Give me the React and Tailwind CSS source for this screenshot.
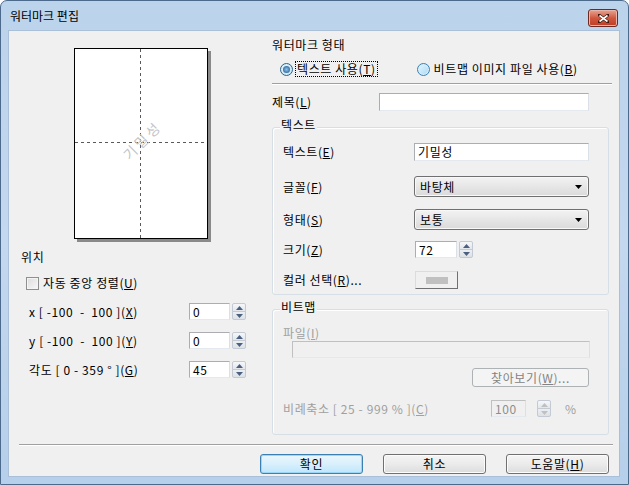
import React from "react";

function Spin({ disabled }) {
  const arrow = disabled ? "#c0c0c0" : "#4b5f80";
  return (
    <div className="flex flex-col w-[14px] h-[17px]">
      <div className="h-[9px] flex items-center justify-center border border-[#c3cad3] rounded-t-[2px] bg-linear-to-b from-[#f6f7f9] to-[#e3e7eb]">
        <svg width="7" height="4" viewBox="0 0 7 4">
          <path d="M0 4 L3.5 0 L7 4 Z" fill={arrow} />
        </svg>
      </div>
      <div className="h-[9px] -mt-px flex items-center justify-center border border-[#c3cad3] rounded-b-[2px] bg-linear-to-b from-[#eceff2] to-[#dde2e7]">
        <svg width="7" height="4" viewBox="0 0 7 4">
          <path d="M0 0 L3.5 4 L7 0 Z" fill={arrow} />
        </svg>
      </div>
    </div>
  );
}

function TextBox({ value, className, disabled }) {
  return (
    <div
      className={
        "h-[17px] border border-[#abadb3] border-r-[#dbdfe6] border-b-[#e3e9ef] px-[3px] leading-[15px] " +
        (disabled ? "bg-[#f0f0f0] text-[#8d8d8d] border-[#c0c0c0]" : "bg-white ") +
        " " + className
      }
    >
      {value}
    </div>
  );
}

function SpinBox({ value, width, disabled }) {
  return (
    <div className="flex items-center gap-[2px]">
      <TextBox value={value} className={width} disabled={disabled} />
      <Spin disabled={disabled} />
    </div>
  );
}

function Combo({ value }) {
  return (
    <div className="w-[175px] h-[21px] border border-[#707070] rounded-[3px] bg-linear-to-b from-[#f3f3f3] to-[#dadada] flex items-center justify-between pl-[5px] pr-[6px] shadow-[inset_0_0_0_1px_#f8f8f8]">
      <span>{value}</span>
      <svg width="7" height="4" viewBox="0 0 7 4">
        <path d="M0 0 L7 0 L3.5 4 Z" fill="#000" />
      </svg>
    </div>
  );
}

function Button({ children, primary, disabled, className }) {
  const look = primary
    ? "border-[#3c7fb1] bg-linear-to-b from-[#eaf6fd] via-[#d9f0fc] to-[#bee6fd] shadow-[inset_0_0_0_1px_#9ad6f5]"
    : "border-[#707070] bg-linear-to-b from-[#f4f4f4] via-[#ebebeb] to-[#dcdcdc] shadow-[inset_0_0_0_1px_#fcfcfc]";
  return (
    <div
      className={
        "border rounded-[3px] flex items-center justify-center " +
        (disabled ? "border-[#adb2b5] bg-[#f4f4f4] text-[#838383]" : look) +
        " " + className
      }
    >
      {children}
    </div>
  );
}

function Radio({ checked }) {
  return checked ? (
    <div className="w-[13px] h-[13px] rounded-full border border-[#2c628b] bg-linear-to-br from-[#e5f4fc] to-[#c4e5f6] flex items-center justify-center">
      <div className="w-[7px] h-[7px] rounded-full bg-radial from-[#8ac6f0] to-[#1c4f80]" />
    </div>
  ) : (
    <div className="w-[13px] h-[13px] rounded-full border border-[#3c7fb1] bg-linear-to-br from-[#e8f6fd] to-[#a9d9f5] shadow-[inset_0_0_0_1px_#d9effb]" />
  );
}

function GroupBox({ title, className, children }) {
  return (
    <div className={"flex flex-col border border-[#d5dfe5] rounded-[3px] shadow-[inset_1px_1px_0_#fff] " + className}>
      <span className="-mt-[11px] ml-[7px] px-[1px] w-fit bg-[#f0f0f0] leading-[16px]">{title}</span>
      {children}
    </div>
  );
}

function Preview() {
  return (
    <div className="relative ml-[65px] mt-[17px] w-[134px] h-[191px] bg-white border border-black shadow-[3px_3px_0_#8a8a8a]">
      <svg className="absolute inset-0" width="132" height="189">
        <line x1="65.5" y1="0" x2="65.5" y2="189" stroke="#5a5a5a" strokeDasharray="3 3" />
        <line x1="0" y1="93.5" x2="132" y2="93.5" stroke="#5a5a5a" strokeDasharray="3 3" />
      </svg>
      <span className="absolute left-[37px] top-[83px] w-[60px] text-center text-[14px] tracking-[3px] leading-[16px] text-[#c4c4c4] -rotate-45">
        기밀성
      </span>
    </div>
  );
}

function PosRow({ label, value }) {
  return (
    <div className="flex items-center h-[17px]">
      <span className="w-[180px] pl-[20px] whitespace-pre">{label}</span>
      <SpinBox value={value} width="w-[41px]" />
    </div>
  );
}

export default function App() {
  return (
    <div className="w-[629px] h-[485px] flex flex-col rounded-t-[7px] border border-[#4c6a8c] bg-linear-to-b from-[#bcd3ec] via-[#c4d8ef] to-[#b6cfea] text-[12px] leading-[16px] tracking-[0.6px] text-black font-['Noto_Sans_CJK_KR','Noto_Sans',sans-serif]">
      <div className="h-[29px] flex items-start justify-between pl-[9px] pr-[10px]">
        <span className="mt-[7px] text-[12px] tracking-normal">워터마크 편집</span>
        <div className="mt-[8px] w-[30px] h-[18px] rounded-[3px] border border-[#6d2a22] bg-linear-to-b from-[#e8a493] via-[#d0573f] to-[#c23a22] flex items-center justify-center shadow-[inset_0_0_0_1px_#eab5a8]">
          <svg width="11" height="9" viewBox="0 0 11 9">
            <path d="M1 1 L10 8 M10 1 L1 8" stroke="#3a1a12" strokeWidth="3" strokeLinecap="square" />
            <path d="M1.5 1.5 L9.5 7.5 M9.5 1.5 L1.5 7.5" stroke="#fff" strokeWidth="1.6" />
          </svg>
        </div>
      </div>

      <div className="ml-[7px] w-[612px] h-[447px] bg-[#f0f0f0] border border-[#aac0d8] flex flex-col">
        <div className="flex h-[404px]">
          {/* left column */}
          <div className="w-[263px] flex flex-col">
            <Preview />
            <span className="ml-[12px] mt-[10px]">위치</span>
            <div className="flex items-center ml-[17px] mt-[10px] h-[16px]">
              <div className="w-[13px] h-[13px] border border-[#8e8f8f] bg-linear-to-br from-[#dcdcdc] to-[#f8f8f8] shadow-[inset_0_0_0_1px_#f4f4f4]" />
              <span className="ml-[4px]">자동 중앙 정렬(<u>U</u>)</span>
            </div>
            <div className="flex flex-col gap-[12px] mt-[12px]">
              <PosRow label={<>x [ -100  -  100 ](<u>X</u>)</>} value="0" />
              <PosRow label={<>y [ -100  -  100 ](<u>Y</u>)</>} value="0" />
              <PosRow label={<>각도 [ 0 - 359 ° ](<u>G</u>)</>} value="45" />
            </div>
          </div>

          {/* right column */}
          <div className="w-[340px] flex flex-col pt-[6px]">
            <span>워터마크 형태</span>
            <div className="flex items-center mt-[8px] h-[16px]">
              <div className="ml-[8px]"><Radio checked /></div>
              <span className="ml-[3px] px-[1px] outline outline-dotted outline-black leading-[14px]">
                텍스트 사용(<u>T</u>)
              </span>
              <div className="ml-[40px]"><Radio /></div>
              <span className="ml-[4px]">비트맵 이미지 파일 사용(<u>B</u>)</span>
            </div>
            <div className="mt-[6px] border-t border-t-[#a0a0a0] border-b border-b-white" />
            <div className="flex items-center mt-[8px] h-[18px]">
              <span className="w-[107px]">제목(<u>L</u>)</span>
              <TextBox value="" className="w-[210px] h-[18px]" />
            </div>

            <GroupBox title="텍스트" className="mt-[16px] w-[337px] h-[169px]">
              <div className="flex items-center mt-[10px] h-[18px] pl-[10px]">
                <span className="w-[131px]">텍스트(<u>E</u>)</span>
                <TextBox value="기밀성" className="w-[175px] h-[18px] leading-[16px]" />
              </div>
              <div className="flex items-center mt-[15px] h-[21px] pl-[10px]">
                <span className="w-[131px]">글꼴(<u>F</u>)</span>
                <Combo value="바탕체" />
              </div>
              <div className="flex items-center mt-[12px] h-[21px] pl-[10px]">
                <span className="w-[131px]">형태(<u>S</u>)</span>
                <Combo value="보통" />
              </div>
              <div className="flex items-center mt-[11px] h-[17px] pl-[10px]">
                <span className="w-[132px]">크기(<u>Z</u>)</span>
                <SpinBox value="72" width="w-[42px]" />
              </div>
              <div className="flex items-center mt-[13px] h-[18px] pl-[10px]">
                <span className="w-[132px]">컬러 선택(<u>R</u>)...</span>
                <div className="w-[43px] h-[18px] border border-[#dcdcdc] border-r-[#707070] border-b-[#707070] bg-[#f0f0f0] flex items-center justify-center">
                  <div className="w-[22px] h-[7px] bg-[#c0c0c0]" />
                </div>
              </div>
            </GroupBox>

            <GroupBox title="비트맵" className="mt-[14px] w-[337px] h-[126px]">
              <span className="mt-[10px] ml-[10px] text-[#a0a0a0]">파일(<u>I</u>)</span>
              <TextBox value="" disabled className="ml-[19px] w-[298px]" />
              <Button disabled className="self-end mr-[19px] mt-[10px] w-[117px] h-[19px]">
                찾아보기(<u>W</u>)...
              </Button>
              <div className="flex items-center mt-[13px] h-[17px] pl-[10px] text-[#a0a0a0]">
                <span className="w-[208px]">비례축소 [ 25 - 999 % ](<u>C</u>)</span>
                <TextBox value="100" disabled className="w-[35px]" />
                <div className="ml-[11px]"><Spin disabled /></div>
                <span className="ml-[14px]">%</span>
              </div>
            </GroupBox>
          </div>
        </div>

        <div className="ml-[10px] w-[594px] mt-[9px] border-t border-t-[#a0a0a0] border-b border-b-white" />
        <div className="flex gap-[20px] ml-[251px] mt-[8px]">
          <Button primary className="w-[103px] h-[20px]">확인</Button>
          <Button className="w-[103px] h-[20px]">취소</Button>
          <Button className="w-[103px] h-[20px]">도움말(<u>H</u>)</Button>
        </div>
      </div>
    </div>
  );
}
